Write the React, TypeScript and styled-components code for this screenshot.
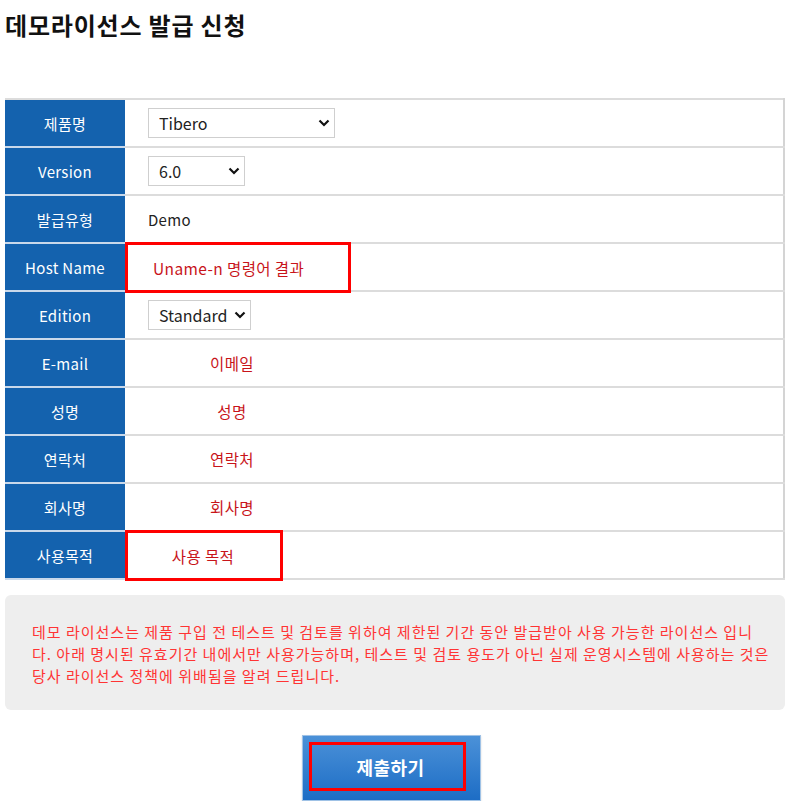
import React from "react";
import styled, { createGlobalStyle } from "styled-components";

const Global = createGlobalStyle`
  html, body { margin: 0; padding: 0; background: #fff; }
  body { font-family: "Noto Sans CJK KR", "Noto Sans", sans-serif; color: #222; }
  * { box-sizing: border-box; }
`;

const Page = styled.div`
  width: 794px;
  padding: 0 9px 0 5px;
`;

const Title = styled.h1`
  margin: 6px 0 0;
  font-size: 24px;
  line-height: 37px;
  font-weight: 700;
  color: #111;
  letter-spacing: 0.8px;
`;

const Table = styled.table`
  margin-top: 55px;
  width: 780px;
  border-collapse: collapse;
  border-top: 2px solid #dcdcdc;
  border-right: 2px solid #d4d4d4;
  table-layout: fixed;
`;

const Row = styled.tr`
  height: 48px;
  border-bottom: 2px solid #dcdcdc;
`;

const Label = styled.th`
  width: 120px;
  background: #1462ae;
  color: #fff;
  font-weight: 400;
  font-size: 15px;
  letter-spacing: 0.3px;
  text-align: center;
  padding: 0;
  border-bottom: 2px solid #c9d8ea;
`;

const Cell = styled.td`
  padding: 0 0 0 23px;
  font-size: 15px;
  letter-spacing: 0.3px;
  color: #222;
  position: relative;
`;

const SelectWrap = styled.div<{ $w: number }>`
  position: relative;
  width: ${(p) => p.$w}px;
  height: 30px;
`;

const Select = styled.select`
  appearance: none;
  width: 100%;
  height: 100%;
  border: 1px solid #cfcfcf;
  background: #fff;
  font-family: "Noto Sans CJK KR", "Noto Sans", sans-serif;
  font-size: 16px;
  color: #222;
  padding: 0 0 0 10px;
  border-radius: 0;
  outline: none;
`;

const Chevron = styled.svg`
  position: absolute;
  right: 5px;
  top: 50%;
  transform: translateY(-50%);
  pointer-events: none;
`;

const Red = styled.span<{ $w?: number }>`
  display: inline-block;
  color: #c8141a;
  font-size: 15.5px;
  letter-spacing: 0.4px;
  width: ${(p) => (p.$w ? `${p.$w}px` : "auto")};
  text-align: center;
`;

const Highlight = styled.div<{ $w: number; $start?: boolean }>`
  position: absolute;
  left: 0;
  top: -2px;
  width: ${(p) => p.$w}px;
  height: 51px;
  border: 3px solid #ff0000;
  display: flex;
  align-items: center;
  justify-content: ${(p) => (p.$start ? "flex-start" : "center")};
  padding: ${(p) => (p.$start ? "0 0 0 25px" : "0 2px 0 0")};
`;

const Notice = styled.div`
  margin-top: 15px;
  width: 780px;
  background: #eeeeee;
  border-radius: 6px;
  padding: 26px 10px 23px 27px;
  color: #ff3434;
  font-size: 15px;
  line-height: 22px;
  white-space: nowrap;
`;

const NoticeLine = styled.span<{ $ls: number }>`
  display: block;
  letter-spacing: ${(p) => p.$ls}px;
`;

const ButtonRow = styled.div`
  display: flex;
  justify-content: center;
  padding: 25px 0 0 0;
  margin-left: -7px;
`;

const Submit = styled.button`
  width: 179px;
  height: 66px;
  border: 1px solid #9fc2e6;
  background: linear-gradient(#4b91d8, #1d6dc5);
  padding: 6px 14px 9px 6px;
  cursor: pointer;
  box-shadow: 0 1px 2px rgba(0, 0, 0, 0.15);
`;

const SubmitInner = styled.span`
  display: flex;
  align-items: center;
  justify-content: center;
  width: 100%;
  height: 100%;
  border: 3px solid #ff0000;
  padding-left: 6px;
  color: #fff;
  font-family: "Noto Sans CJK KR", sans-serif;
  font-size: 18px;
  letter-spacing: 0.5px;
  font-weight: 700;
`;

const Arrow = () => (
  <Chevron width="12" height="8" viewBox="0 0 12 8">
    <path d="M1.5 1.5 L6 6 L10.5 1.5" fill="none" stroke="#111" strokeWidth="2.2" />
  </Chevron>
);

const Dropdown = ({ w, options }: { w: number; options: string[] }) => (
  <SelectWrap $w={w}>
    <Select defaultValue={options[0]}>
      {options.map((o) => (
        <option key={o}>{o}</option>
      ))}
    </Select>
    <Arrow />
  </SelectWrap>
);

export default function App() {
  return (
    <Page>
      <Global />
      <Title>데모라이선스 발급 신청</Title>
      <Table>
        <tbody>
          <Row>
            <Label>제품명</Label>
            <Cell>
              <Dropdown w={187} options={["Tibero"]} />
            </Cell>
          </Row>
          <Row>
            <Label>Version</Label>
            <Cell>
              <Dropdown w={97} options={["6.0"]} />
            </Cell>
          </Row>
          <Row>
            <Label>발급유형</Label>
            <Cell>Demo</Cell>
          </Row>
          <Row>
            <Label>Host Name</Label>
            <Cell>
              <Highlight $w={226} $start>
                <Red>Uname-n 명령어 결과</Red>
              </Highlight>
            </Cell>
          </Row>
          <Row>
            <Label>Edition</Label>
            <Cell>
              <Dropdown w={103} options={["Standard"]} />
            </Cell>
          </Row>
          <Row>
            <Label>E-mail</Label>
            <Cell>
              <Red $w={168}>이메일</Red>
            </Cell>
          </Row>
          <Row>
            <Label>성명</Label>
            <Cell>
              <Red $w={168}>성명</Red>
            </Cell>
          </Row>
          <Row>
            <Label>연락처</Label>
            <Cell>
              <Red $w={168}>연락처</Red>
            </Cell>
          </Row>
          <Row>
            <Label>회사명</Label>
            <Cell>
              <Red $w={168}>회사명</Red>
            </Cell>
          </Row>
          <Row>
            <Label>사용목적</Label>
            <Cell>
              <Highlight $w={158}>
                <Red>사용 목적</Red>
              </Highlight>
            </Cell>
          </Row>
        </tbody>
      </Table>
      <Notice>
        <NoticeLine $ls={1.0}>
          데모 라이선스는 제품 구입 전 테스트 및 검토를 위하여 제한된 기간 동안 발급받아 사용 가능한 라이선스 입니
        </NoticeLine>
        <NoticeLine $ls={1.0}>
          다. 아래 명시된 유효기간 내에서만 사용가능하며, 테스트 및 검토 용도가 아닌 실제 운영시스템에 사용하는 것은
        </NoticeLine>
        <NoticeLine $ls={1.0}>당사 라이선스 정책에 위배됨을 알려 드립니다.</NoticeLine>
      </Notice>
      <ButtonRow>
        <Submit type="button">
          <SubmitInner>제출하기</SubmitInner>
        </Submit>
      </ButtonRow>
    </Page>
  );
}
